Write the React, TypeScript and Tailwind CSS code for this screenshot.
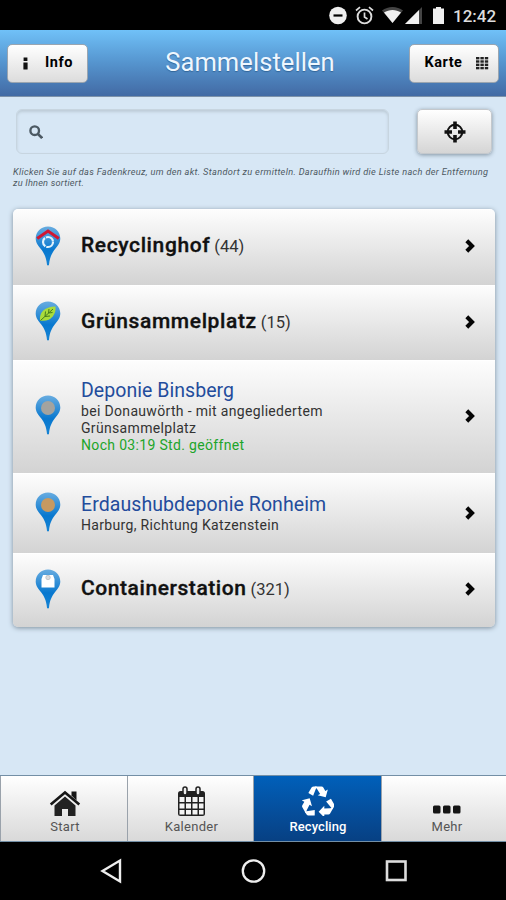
import React from 'react';

type PinKind = 'recycling' | 'green' | 'gray' | 'soil' | 'container';

interface Station {
  kind: PinKind;
  title: string;
  count?: number;
  lines?: string[];
  opening?: string;
  rowClass: string;
  titleClass: string;
}

const stations: Station[] = [
  { kind: 'recycling', title: 'Recyclinghof', count: 44, rowClass: 'h-[76px] pb-[3px]', titleClass: 'tracking-[0.620px]' },
  { kind: 'green', title: 'Grünsammelplatz', count: 15, rowClass: 'h-[75px] pb-[3px]', titleClass: 'tracking-[0.620px]' },
  {
    kind: 'gray',
    title: 'Deponie Binsberg',
    lines: ['bei Donauwörth - mit angegliedertem', 'Grünsammelplatz'],
    opening: 'Noch 03:19 Std. geöffnet',
    rowClass: 'h-[113px] pb-[3px]',
    titleClass: 'tracking-[0.050px]',
  },
  {
    kind: 'soil',
    title: 'Erdaushubdeponie Ronheim',
    lines: ['Harburg, Richtung Katzenstein'],
    rowClass: 'h-[80px] pb-[2px]',
    titleClass: 'tracking-[0.080px]',
  },
  { kind: 'container', title: 'Containerstation', count: 321, rowClass: 'h-[74px] pb-[3px]', titleClass: 'tracking-[0.570px]' },
];

const MapPin = ({ kind }: { kind: PinKind }) => (
  <svg className="mb-px block h-[40px] w-[26px]" viewBox="0 0 26 40">
    <defs>
      <linearGradient id={`pin-${kind}`} x1="0" y1="0" x2="0" y2="1">
        <stop offset="0" stopColor="#68ace0" />
        <stop offset="0.6" stopColor="#0878cf" />
        <stop offset="1" stopColor="#1683d4" />
      </linearGradient>
    </defs>
    <path
      d="M13 .5C6 .5.7 5.8.7 12.5c0 4.3 2.6 7.3 5.400 10.700 3 4 5.200 8 5.900 15.500.1 1 1.900 1 2 0 .7-7.500 2.900-11.500 5.900-15.500 2.800-3.400 5.400-6.400 5.400-10.700C25.300 5.800 20 .5 13 .5z"
      fill={`url(#pin-${kind})`}
    />
    {kind === 'recycling' && (
      <>
        <circle cx="13" cy="16" r="5" fill="none" stroke="#e2f2fc" strokeWidth="2.200" strokeDasharray="9.400 1" />
        <path d="M2.200 12.500 13 5l10.800 7.500" fill="none" stroke="#cf1733" strokeWidth="3" />
      </>
    )}
    {kind === 'green' && (
      <>
        <path d="M5 19.500c-1-7.500 4-14 15.500-14C21.500 14 15 21.500 5 19.500z" fill="#a9dc3b" />
        <path d="M5.500 19.500 18 8M10 15.500l.5-5M10 15.500l5-.5M13.500 12l.5-4M13.500 12l4-.5" fill="none" stroke="#467c1c" strokeWidth="1" />
      </>
    )}
    {kind === 'gray' && <circle cx="13" cy="13" r="7" fill="#a3a39f" />}
    {kind === 'soil' && <circle cx="13" cy="13" r="7" fill="#c69961" />}
    {kind === 'container' && (
      <>
        <path d="M8 6h10l1.500 4v8.500h-13V10z" fill="#fff" />
        <circle cx="13" cy="8.500" r="2.200" fill="#dcdcdc" stroke="#b9bec3" strokeWidth=".8" />
      </>
    )}
  </svg>
);

const Chevron = () => (
  <svg className="block h-[14px] w-[10px]" viewBox="0 0 10 14">
    <path d="M1.800 1.800 7 7 1.800 12.200" fill="none" stroke="#050505" strokeWidth="4.100" />
  </svg>
);

const StatusBar = () => (
  <div className="flex h-[30px] items-center justify-end bg-black pr-[9px]">
    <svg className="block h-[30px] w-[120px]" viewBox="0 0 120 30">
      <circle cx="12" cy="15.500" r="8.800" fill="#eee" />
      <path d="M7.500 15.500h9" stroke="#000" strokeWidth="2.200" />
      <circle cx="38.500" cy="16.500" r="6.900" fill="none" stroke="#ddd" strokeWidth="1.900" />
      <path d="M38.500 12.500v4.500l3 2M30 10.500l4-3.300M47 10.500l-4-3.300" fill="none" stroke="#ddd" strokeWidth="1.700" />
      <path d="M56 10.500c6-4.700 15-4.700 21 0L66.500 23z" fill="#444" />
      <path d="M58 12.500c5-3.500 12-3.500 17 0L66.500 23z" fill="#f0f0f0" />
      <path d="M96 7v17H79z" fill="#444" />
      <path d="M93 10V24H79z" fill="#f0f0f0" />
      <path d="M107 8.500h3V7h5v1.500h3V24h-11z" fill="#efefef" />
    </svg>
    <span className="ml-[7px] w-[44px] pt-[2px] text-[17px] leading-[30px] font-medium text-[#ddd]">12:42</span>
  </div>
);

const Header = () => (
  <header className="grid h-[67px] grid-cols-[82px_1fr_90px] items-center border-b border-[#7d92aa] bg-linear-to-b from-[#70c1f8] via-[#5594ce] to-[#426aa4] px-[7px]">
    <button className="flex h-[39px] w-[81px] items-center rounded-[5px] border border-[#9aa5b0] bg-linear-to-b from-white to-[#dcdcdc] pl-[15px] text-[14.500px] font-bold text-black">
      <svg className="block h-[13px] w-[5px]" viewBox="0 0 5 13">
        <path d="M.6 .5h3.800v3.400H.6zM.4 5.500h4.200v7H.4z" fill="#111" />
      </svg>
      <span className="ml-[17px] tracking-[0.6px]">Info</span>
    </button>
    <h1 className="pb-px pl-[2px] text-center text-[25.500px] tracking-[0.080px] text-[#eef7ff] [text-shadow:0_1px_1px_#336699]">Sammelstellen</h1>
    <button className="flex h-[39px] w-[90px] items-center rounded-[5px] border border-[#9aa5b0] bg-linear-to-b from-white to-[#dcdcdc] pl-[14px] text-[14.500px] font-bold text-black">
      <span className="w-[39px] tracking-[0.5px]">Karte</span>
      <svg className="ml-[13px] block h-[13px] w-[13px]" viewBox="0 0 13 13">
        {[0, 3.3, 6.6, 9.9].map(y =>
          [0, 4.4, 8.8].map(x => <rect key={`${x}-${y}`} x={x} y={y} width="3.400" height="2.400" fill="#222" />)
        )}
      </svg>
    </button>
  </header>
);

const SearchArea = () => (
  <div className="h-[112px] pt-[12px]">
    <div className="flex justify-between pr-[14px] pl-[16px]">
      <div className="flex h-[45px] w-[373px] items-center rounded-[6px] border border-[#c7d5e0] pt-px pl-[12px] shadow-[inset_0_2px_3px_#bdcbd7]">
        <svg className="block h-[14px] w-[14px]" viewBox="0 0 13 13">
          <circle cx="5.300" cy="5.300" r="4" fill="none" stroke="#4c5963" strokeWidth="2.200" />
          <path d="m8.200 8.200 4 4" stroke="#4c5963" strokeWidth="2.500" />
        </svg>
      </div>
      <button className="flex h-[45px] w-[75px] items-center justify-center rounded-[5px] border border-[#c4c8cc] bg-linear-to-b from-white to-[#d5d5d5] shadow-[0_1px_4px_#8292a0]">
        <svg className="block h-[22px] w-[22px]" viewBox="0 0 22 22">
          <circle cx="11" cy="11" r="7.300" fill="none" stroke="#111" strokeWidth="2" />
          <path d="M11 .5v7.500M11 14v7.500M.5 11H8M14 11h7.500" stroke="#111" strokeWidth="3.600" />
        </svg>
      </button>
    </div>
    <p className="mt-[12px] ml-[13px] text-[9.200px] leading-[11px] whitespace-nowrap text-[#4d5962] italic">
      <span className="block tracking-[0.325px]">Klicken Sie auf das Fadenkreuz, um den akt. Standort zu ermitteln. Daraufhin wird die Liste nach der Entfernung</span>
      <span className="block tracking-[0.22px]">zu Ihnen sortiert.</span>
    </p>
  </div>
);

const StationRow = ({ station }: { station: Station }) => (
  <li className={`flex items-center border-t border-white bg-linear-to-b from-[#fdfdfd] to-[#d3d3d3] pl-[22px] ${station.rowClass}`}>
    <MapPin kind={station.kind} />
    <div className="ml-[20px] flex-1 whitespace-nowrap">
      {station.count !== undefined ? (
        <div className="leading-[26px]">
          <span className={`text-[21px] font-medium text-[#111] [-webkit-text-stroke:0.35px_#111] ${station.titleClass}`}>{station.title}</span>
          <span className="ml-[4px] text-[16.500px] text-[#333]">({station.count})</span>
        </div>
      ) : (
        <div className="pt-px">
          <h2 className={`text-[19.500px] leading-[24px] text-[#234c9c] ${station.titleClass}`}>{station.title}</h2>
          {station.lines?.map(line => (
            <p key={line} className="text-[14px] leading-[17px] tracking-[0.330px] text-[#333]">{line}</p>
          ))}
          {station.opening && <p className="text-[14px] leading-[17px] tracking-[0.330px] text-[#1da52a]">{station.opening}</p>}
        </div>
      )}
    </div>
    <div className="mr-[20px]">
      <Chevron />
    </div>
  </li>
);

const HouseIcon = () => (
  <svg className="block h-[26px] w-[32px]" viewBox="0 0 32 26">
    <path d="M22.500 1.500h5v9l-5-5z" fill="#171717" />
    <path d="M1.700 14.500 16 2.500l14.300 12" fill="none" stroke="#171717" strokeWidth="2.600" />
    <path d="m5.500 15.500 10.500-9 10.500 9V26H19v-7h-6v7H5.500z" fill="#222" />
  </svg>
);

const CalendarIcon = () => (
  <svg className="block h-[31px] w-[29px]" viewBox="0 0 29 31">
    <rect x="1" y="5" width="27" height="25" rx="2.500" fill="#222" />
    <path d="M2.500 11h5v5h-5zM9 11h5v5H9zM15.500 11h5v5h-5zM22 11h4.500v5H22zM2.500 17.500h5v5h-5zM9 17.500h5v5H9zM15.500 17.500h5v5h-5zM22 17.500h4.500v5H22zM2.500 24h5v4.500h-5zM9 24h5v4.500H9zM15.500 24h5v4.500h-5zM22 24h4.500v4.500H22z" fill="#f4f4f4" />
    <rect x="6" y="1" width="4" height="8" rx="2" fill="#eee" stroke="#222" strokeWidth="1.500" />
    <rect x="19" y="1" width="4" height="8" rx="2" fill="#eee" stroke="#222" strokeWidth="1.500" />
  </svg>
);

const RecycleIcon = () => (
  <svg className="block h-[30px] w-[32px]" viewBox="0 0 34 32">
    {[0, 120, 240].map(angle => (
      <g key={angle} transform={`rotate(${angle} 17 17.500)`} fill="#fff">
        <path d="M6.700 7.500 10.300 1.300Q11 .4 12.500 .4h3.200L11.800 10.500z" />
        <path d="M13.500.4h7.300q1.200 0 1.900 1.100l2.100 3.700 2.700-1.500-2.300 8.300-8.500-2.100 2.600-1.500L16 3.200z" />
      </g>
    ))}
  </svg>
);

const MoreIcon = () => (
  <svg className="block h-[9px] w-[28px]" viewBox="0 0 28 9">
    <rect y=".5" width="7.500" height="8" rx="1.500" fill="#151515" />
    <rect x="10" y=".5" width="7.500" height="8" rx="1.500" fill="#151515" />
    <rect x="20" y=".5" width="7.500" height="8" rx="1.500" fill="#151515" />
  </svg>
);

const tabs = [
  { label: 'Start', icon: <HouseIcon />, iconClass: 'pb-[3px]', padClass: 'pl-[2px]', active: false },
  { label: 'Kalender', icon: <CalendarIcon />, iconClass: 'pb-[2px]', padClass: 'pl-[2px]', active: false },
  { label: 'Recycling', icon: <RecycleIcon />, iconClass: 'pb-[3px]', padClass: 'pl-px', active: true },
  { label: 'Mehr', icon: <MoreIcon />, iconClass: 'pb-[5px]', padClass: 'pl-[6px]', active: false },
];

const TabBar = () => (
  <nav className="grid h-[67px] grid-cols-[127px_126px_128px_125px] border-y border-[#738fa6]">
    {tabs.map(tab => (
      <div
        key={tab.label}
        className={`flex flex-col items-center border-l border-[#9aa2ab] ${
          tab.active ? 'bg-linear-to-b from-[#0060ba] to-[#074083] text-white' : 'bg-linear-to-b from-white to-[#d9d9d9] text-[#555]'
        } ${tab.padClass}`}
      >
        <div className={`flex h-[43px] items-end ${tab.iconClass}`}>{tab.icon}</div>
        <span className={`text-[13px] leading-[16px] ${tab.active ? 'font-medium tracking-[0.100px]' : 'tracking-[0.300px]'}`}>{tab.label}</span>
      </div>
    ))}
  </nav>
);

const App: React.FC = () => {
  return (
    <div className="flex h-[900px] w-[506px] flex-col overflow-hidden bg-[#d7e7f5] font-['Roboto',sans-serif]">
      <StatusBar />
      <Header />
      <SearchArea />
      <main className="flex-1 px-[13px]">
        <ul className="w-[482px] overflow-hidden rounded-[5px] shadow-[0_1px_5px_#7e8e9b]">
          {stations.map(station => (
            <StationRow key={station.title} station={station} />
          ))}
        </ul>
      </main>
      <TabBar />
      {/* Android navigation keys */}
      <div className="flex h-[58px] items-center justify-center bg-black">
        <svg className="block h-[28px] w-[310px]" viewBox="0 0 310 28">
          <path d="M22 3.500v21L4.500 14z" fill="none" stroke="#eee" strokeWidth="2.400" />
          <circle cx="155.500" cy="14" r="10.700" fill="none" stroke="#eee" strokeWidth="2.300" />
          <rect x="289" y="4.500" width="18.500" height="18.500" fill="none" stroke="#ddd" strokeWidth="2.600" />
        </svg>
      </div>
    </div>
  );
};

export default App;
